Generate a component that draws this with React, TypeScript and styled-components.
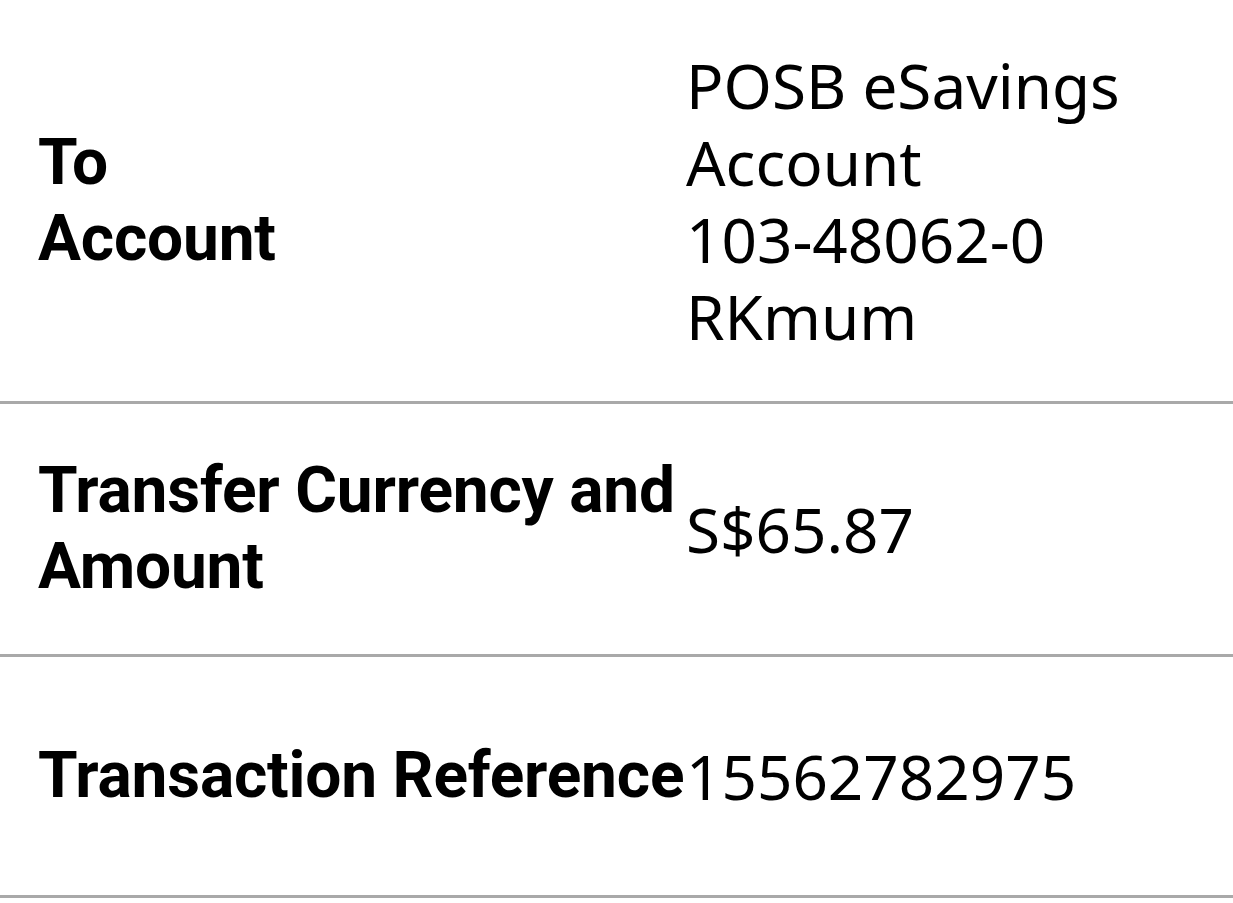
import React from 'react';
import styled, { createGlobalStyle } from 'styled-components';

const GlobalStyle = createGlobalStyle`
  html, body {
    margin: 0;
    padding: 0;
    background: #ffffff;
  }
  body {
    font-family: 'Noto Sans', 'Open Sans', sans-serif;
    color: #000000;
  }
`;

const Table = styled.div({
  display: 'flex',
  flexDirection: 'column',
  width: '1233px',
});

interface IRowProps {
  rowHeight: number;
}

const Row = styled.div<IRowProps>((props) => ({
  display: 'grid',
  gridTemplateColumns: '648px 1fr',
  alignItems: 'center',
  height: `${props.rowHeight}px`,
  padding: '0 0 0 38px',
  borderBottom: '3px solid #a9a9a9',
  boxSizing: 'border-box',
}));

// The label face in the source is a narrow bold; Roboto's bold is close in width.
const Label = styled.div({
  fontFamily: "Roboto, 'Noto Sans', sans-serif",
  fontSize: '64px',
  fontWeight: 700,
  lineHeight: '76px',
  letterSpacing: '-0.2px',
  whiteSpace: 'nowrap',
});

const Value = styled.div({
  fontSize: '62px',
  fontWeight: 400,
  lineHeight: '77px',
  whiteSpace: 'nowrap',
});

const rows = [
  { label: ['To', 'Account'], value: ['POSB eSavings', 'Account', '103-48062-0', 'RKmum'], height: 404 },
  { label: ['Transfer Currency and', 'Amount'], value: ['S$65.87'], height: 253 },
  { label: ['Transaction Reference'], value: ['15562782975'], height: 241 },
];

export default function App() {
  return (
    <>
      <GlobalStyle />
      <Table>
        {rows.map((row) => (
          <Row key={row.label.join(' ')} rowHeight={row.height}>
            <Label>
              {row.label.map((line) => (
                <div key={line}>{line}</div>
              ))}
            </Label>
            <Value>
              {row.value.map((line) => (
                <div key={line}>{line}</div>
              ))}
            </Value>
          </Row>
        ))}
      </Table>
    </>
  );
}
